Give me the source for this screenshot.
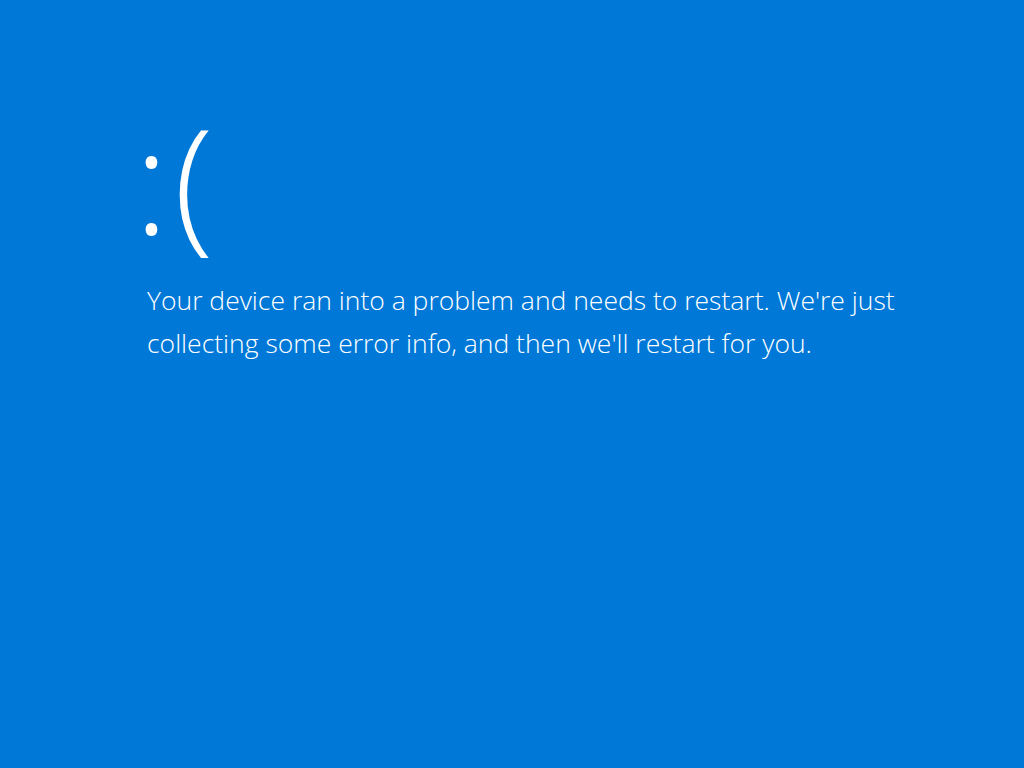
export default function App() {
  return (
    <div
      className="min-h-screen w-full bg-[#0078d7] text-white"
      style={{ fontFamily: '"Segoe UI Light", "Open Sans", "Noto Sans", sans-serif' }}
    >
      <div className="pl-[134px] pt-[94px]">
        <div className="text-[146px] font-light leading-[170px]">
          <span className="mr-[5px]">:</span>(
        </div>
        <p className="mt-[15px] max-w-[806px] pl-[13px] text-[26.5px] font-light leading-[43px]">
          Your device ran into a problem and needs to restart. We're just collecting some error
          info, and then we'll restart for you.
        </p>
      </div>
    </div>
  );
}
